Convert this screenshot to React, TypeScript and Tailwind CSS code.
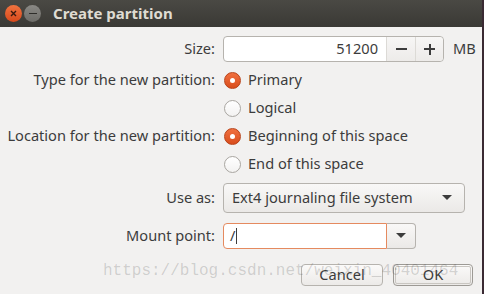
import React from "react";

const font = { fontFamily: '"Noto Sans", "Open Sans", sans-serif' };

function Radio({ checked, label }: { checked?: boolean; label: string }) {
  return (
    <div className="flex h-[28px] items-center gap-[7px]">
      {checked ? (
        <span className="flex h-[17px] w-[17px] items-center justify-center rounded-full border border-[#b8431a] bg-gradient-to-b from-[#f0703f] to-[#d94d1b]">
          <span className="h-[5px] w-[5px] rounded-full bg-white" />
        </span>
      ) : (
        <span className="h-[17px] w-[17px] rounded-full border border-[#a9a6a1] bg-gradient-to-b from-white to-[#f3f2f1]" />
      )}
      <span className="text-[14.6px] text-[#3c3c3c]">{label}</span>
    </div>
  );
}

function Label({ children }: { children: React.ReactNode }) {
  return (
    <div className="w-[215px] shrink-0 text-right text-[14.6px] text-[#3c3c3c]">{children}</div>
  );
}

function Caret() {
  return (
    <svg width="10" height="6" viewBox="0 0 10 6">
      <path d="M0 0 L10 0 L5 5 Z" fill="#3c3c3c" />
    </svg>
  );
}

export default function App() {
  return (
    <div className="h-[294px] w-[484px] overflow-hidden bg-[#3a2a33]" style={font}>
      <div className="relative h-[294px] w-[482px] bg-[#f2f1f0]">
        {/* Title bar */}
        <div className="flex h-[27px] items-center bg-gradient-to-b from-[#4a4944] to-[#3a3935] pl-[5px]">
          <span className="flex h-[17px] w-[17px] items-center justify-center rounded-full bg-gradient-to-b from-[#f0733f] to-[#d8481a]">
            <svg width="7" height="7" viewBox="0 0 7 7">
              <path d="M1 1 L6 6 M6 1 L1 6" stroke="#3a1a10" strokeWidth="1.4" />
            </svg>
          </span>
          <span className="ml-[2px] flex h-[17px] w-[17px] items-center justify-center rounded-full bg-gradient-to-b from-[#8a8985] to-[#6d6c68]">
            <span className="h-[1.5px] w-[8px] bg-[#2e2d2a]" />
          </span>
          <span className="ml-[12px] text-[15px] font-bold text-[#dfdbd2]">Create partition</span>
        </div>

        <div className="flex flex-col pt-[9px]">
          {/* Size */}
          <div className="flex items-center gap-[8px]">
            <Label>Size:</Label>
            <div className="flex h-[26px] w-[221px] items-stretch rounded-[4px] border border-[#b6b3ae] bg-white">
              <div className="flex flex-1 items-center justify-end pr-[8px] text-[14.6px] text-[#3c3c3c]">51200</div>
              <div className="flex w-[29px] items-center justify-center border-l border-[#dcdad6] bg-gradient-to-b from-[#f7f6f5] to-[#edebe9]">
                <span className="h-[2px] w-[11px] bg-[#3c3c3c]" />
              </div>
              <div className="flex w-[28px] items-center justify-center rounded-r-[4px] border-l border-[#dcdad6] bg-gradient-to-b from-[#f7f6f5] to-[#edebe9]">
                <span className="relative h-[11px] w-[11px]">
                  <span className="absolute left-0 top-[4.5px] h-[2px] w-[11px] bg-[#3c3c3c]" />
                  <span className="absolute left-[4.5px] top-0 h-[11px] w-[2px] bg-[#3c3c3c]" />
                </span>
              </div>
            </div>
            <span className="ml-[1px] text-[14.6px] text-[#3c3c3c]">MB</span>
          </div>

          {/* Type */}
          <div className="mt-[4px] flex items-center gap-[9px]">
            <Label>Type for the new partition:</Label>
            <Radio checked label="Primary" />
          </div>
          <div className="flex pl-[224px]">
            <Radio label="Logical" />
          </div>
          <div className="flex items-center gap-[9px]">
            <Label>Location for the new partition:</Label>
            <Radio checked label="Beginning of this space" />
          </div>
          <div className="flex pl-[224px]">
            <Radio label="End of this space" />
          </div>

          {/* Use as */}
          <div className="mt-[5px] flex items-center gap-[8px]">
            <Label>Use as:</Label>
            <div className="flex h-[30px] w-[242px] items-center justify-between rounded-[4px] border border-[#b6b3ae] bg-gradient-to-b from-[#f9f8f7] to-[#ebe9e7] pl-[8px] pr-[12px] text-[14.6px] text-[#3c3c3c]">
              <span>Ext4 journaling file system</span>
              <Caret />
            </div>
          </div>

          {/* Mount point */}
          <div className="mt-[10px] flex items-center gap-[8px]">
            <Label>Mount point:</Label>
            <div className="flex h-[26px] w-[193px]">
              <div className="flex flex-1 items-center rounded-l-[4px] border border-[#e58a5f] bg-white pl-[6px] text-[14.6px] text-[#3c3c3c]">
                /<span className="ml-[1px] h-[16px] w-[1px] bg-[#3c3c3c]" />
              </div>
              <div className="flex w-[29px] items-center justify-center rounded-r-[4px] border border-l-0 border-[#b6b3ae] bg-gradient-to-b from-[#f9f8f7] to-[#ebe9e7]">
                <Caret />
              </div>
            </div>
          </div>

          {/* Buttons */}
          <div className="mt-[15px] flex justify-end gap-[10px] pr-[9px]">
            <button className="flex h-[22px] w-[82px] items-center justify-center rounded-[4px] border border-[#b6b3ae] bg-gradient-to-b from-[#fbfaf9] to-[#eceae8] text-[14.6px] text-[#3c3c3c]">
              Cancel
            </button>
            <button className="flex h-[22px] w-[80px] items-center justify-center rounded-[4px] border border-[#9d9a95] bg-gradient-to-b from-[#fbfaf9] to-[#eceae8] text-[14.6px] text-[#3c3c3c] outline outline-1 outline-offset-[-3px] outline-[#c9c6c1]">
              OK
            </button>
          </div>
        </div>

        {/* Watermark */}
        <div
          className="pointer-events-none absolute left-[103px] top-[259px] whitespace-nowrap text-[16px] text-[#3c3c3c]/20"
          style={{ fontFamily: '"Liberation Mono", monospace' }}
        >
          https://blog.csdn.net/weixin_40401464
        </div>
      </div>
    </div>
  );
}
